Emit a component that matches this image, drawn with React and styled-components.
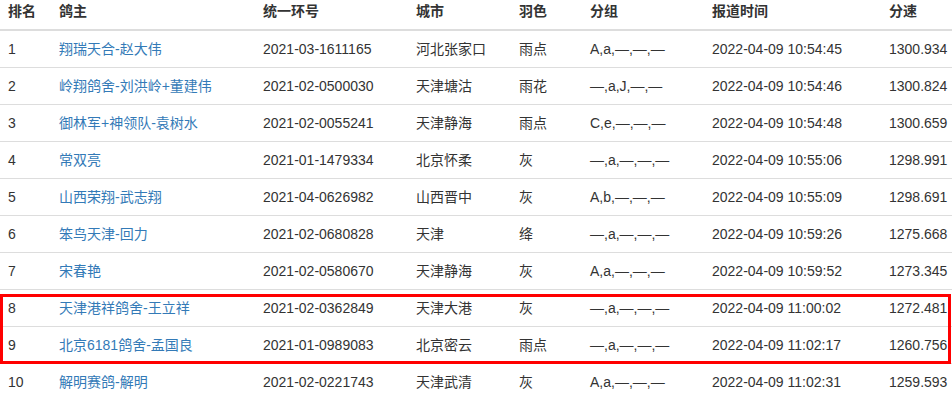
import React from "react";
import styled, { createGlobalStyle } from "styled-components";

const GlobalStyle = createGlobalStyle`
  html, body {
    margin: 0;
    padding: 0;
    background: #fff;
  }
  body {
    font-family: "Liberation Sans", "Noto Sans CJK SC", sans-serif;
    font-size: 14px;
    line-height: 20px;
    color: #333;
  }
`;

const Wrapper = styled.div`
  position: relative;
  width: 952px;
`;

const Table = styled.table`
  width: 952px;
  border-collapse: collapse;
  border-spacing: 0;
  table-layout: fixed;
`;

const HeadCell = styled.th`
  text-align: left;
  font-weight: bold;
  padding: 1px 8px 8px;
  line-height: 20px;
  border-bottom: 2px solid #ddd;
  vertical-align: bottom;
  white-space: nowrap;
`;

const Cell = styled.td`
  padding: 8px;
  line-height: 20px;
  border-top: 1px solid #ddd;
  vertical-align: top;
  white-space: nowrap;
`;

const Owner = styled.a`
  color: #337ab7;
  text-decoration: none;
`;

// annotation box drawn over rows 8 and 9
const Highlight = styled.div`
  position: absolute;
  left: 0;
  top: 294px;
  width: 951px;
  height: 70px;
  box-sizing: border-box;
  border: 3px solid #f00;
  pointer-events: none;
`;

const columns = [
  { title: "排名", width: 51 },
  { title: "鸽主", width: 204 },
  { title: "统一环号", width: 153 },
  { title: "城市", width: 103 },
  { title: "羽色", width: 71 },
  { title: "分组", width: 122 },
  { title: "报道时间", width: 177 },
  { title: "分速", width: 71 },
];

const rows = [
  ["1", "翔瑞天合-赵大伟", "2021-03-1611165", "河北张家口", "雨点", "A,a,—,—,—", "2022-04-09 10:54:45", "1300.934"],
  ["2", "岭翔鸽舍-刘洪岭+董建伟", "2021-02-0500030", "天津塘沽", "雨花", "—,a,J,—,—", "2022-04-09 10:54:46", "1300.824"],
  ["3", "御林军+神领队-袁树水", "2021-02-0055241", "天津静海", "雨点", "C,e,—,—,—", "2022-04-09 10:54:48", "1300.659"],
  ["4", "常双亮", "2021-01-1479334", "北京怀柔", "灰", "—,a,—,—,—", "2022-04-09 10:55:06", "1298.991"],
  ["5", "山西荣翔-武志翔", "2021-04-0626982", "山西晋中", "灰", "A,b,—,—,—", "2022-04-09 10:55:09", "1298.691"],
  ["6", "笨鸟天津-回力", "2021-02-0680828", "天津", "绛", "—,a,—,—,—", "2022-04-09 10:59:26", "1275.668"],
  ["7", "宋春艳", "2021-02-0580670", "天津静海", "灰", "A,a,—,—,—", "2022-04-09 10:59:52", "1273.345"],
  ["8", "天津港祥鸽舍-王立祥", "2021-02-0362849", "天津大港", "灰", "—,a,—,—,—", "2022-04-09 11:00:02", "1272.481"],
  ["9", "北京6181鸽舍-孟国良", "2021-01-0989083", "北京密云", "雨点", "—,a,—,—,—", "2022-04-09 11:02:17", "1260.756"],
  ["10", "解明赛鸽-解明", "2021-02-0221743", "天津武清", "灰", "A,a,—,—,—", "2022-04-09 11:02:31", "1259.593"],
];

export default function App() {
  return (
    <Wrapper>
      <GlobalStyle />
      <Table>
        <colgroup>
          {columns.map((c) => (
            <col key={c.title} style={{ width: c.width }} />
          ))}
        </colgroup>
        <thead>
          <tr>
            {columns.map((c) => (
              <HeadCell key={c.title}>{c.title}</HeadCell>
            ))}
          </tr>
        </thead>
        <tbody>
          {rows.map((r) => (
            <tr key={r[0]}>
              {r.map((v, i) => (
                <Cell key={i}>{i === 1 ? <Owner href="#">{v}</Owner> : v}</Cell>
              ))}
            </tr>
          ))}
        </tbody>
      </Table>
      <Highlight />
    </Wrapper>
  );
}
